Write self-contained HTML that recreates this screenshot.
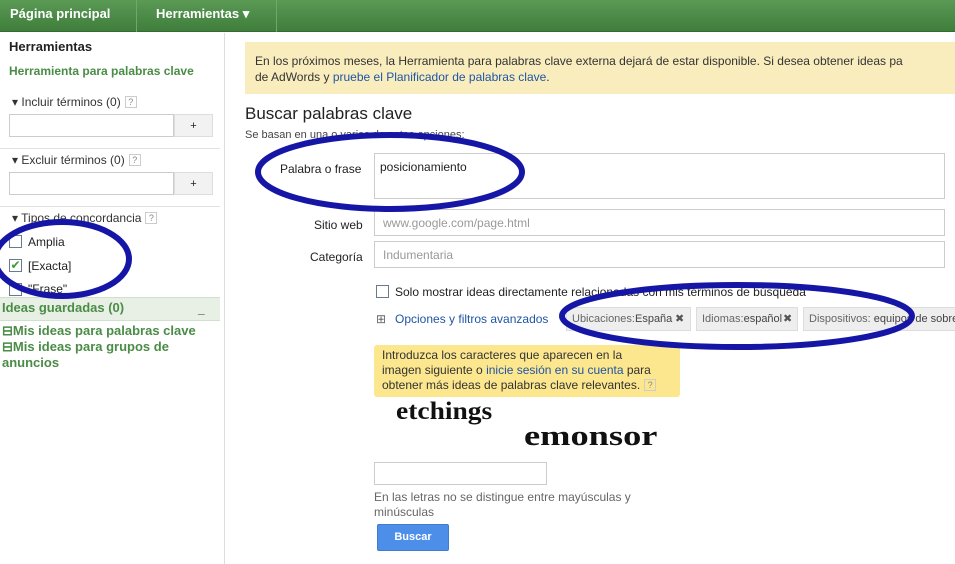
<!DOCTYPE html>
<html><head><meta charset="utf-8"><style>
*{margin:0;padding:0;box-sizing:border-box}
body{width:955px;height:564px;overflow:hidden;background:#fff;font-family:"Liberation Sans",Arial,sans-serif;font-size:12px;color:#222;position:relative}
.a{position:absolute;white-space:nowrap}
.top{position:absolute;left:0;top:0;width:955px;height:32px;background:linear-gradient(#5a9a55,#3f7e3b);border-bottom:1px solid #356b32}
.top span{position:absolute;top:6px;color:#fff;font-weight:bold;font-size:13px}
.sep{position:absolute;top:0;width:1px;height:32px;background:#6fa86a}
.green{color:#4a8c46;font-weight:bold}
.inp{position:absolute;border:1px solid #ccc;background:#fff}
.btn{position:absolute;border:1px solid #ddd;background:#f2f2f2;text-align:center;font-size:11px;line-height:22px}
.q{display:inline-block;width:12px;height:12px;border:1px solid #ccc;font-size:9px;line-height:10px;text-align:center;color:#888;vertical-align:1px;margin-left:4px}
.cb{position:absolute;width:13px;height:13px;border:1px solid #6a7a8c;background:#fff}
.link{color:#1f55a5}
.chip{position:absolute;top:307px;height:24px;background:#eee;border:1px solid #ddd;font-size:11px;line-height:22px;padding-left:5px;color:#666}
.chip b{color:#444;font-weight:normal}
</style></head><body>
<div class="top">
<span style="left:10px">Página principal</span>
<div class="sep" style="left:136px"></div>
<span style="left:156px">Herramientas ▾</span>
<div class="sep" style="left:276px"></div>
</div>
<div class="a" style="left:224px;top:33px;width:1px;height:531px;background:#ddd"></div>

<div class="a" style="left:9px;top:39px;font-weight:bold;font-size:13px">Herramientas</div>
<div class="a green" style="left:9px;top:64px;font-size:12px">Herramienta para palabras clave</div>
<div class="a" style="left:12px;top:95px;color:#333">▾ Incluir términos (0)<span class="q">?</span></div>
<div class="inp" style="left:9px;top:114px;width:165px;height:23px"></div>
<div class="btn" style="left:174px;top:114px;width:39px;height:23px">+</div>
<div class="a" style="left:0;top:148px;width:220px;height:1px;background:#e2e2e2"></div>
<div class="a" style="left:12px;top:153px;color:#333">▾ Excluir términos (0)<span class="q">?</span></div>
<div class="inp" style="left:9px;top:172px;width:165px;height:23px"></div>
<div class="btn" style="left:174px;top:172px;width:39px;height:23px">+</div>
<div class="a" style="left:0;top:206px;width:220px;height:1px;background:#e2e2e2"></div>
<div class="a" style="left:12px;top:211px;color:#333">▾ Tipos de concordancia<span class="q">?</span></div>
<div class="cb" style="left:9px;top:235px"></div><div class="a" style="left:28px;top:235px">Amplia</div>
<div class="cb" style="left:9px;top:259px;color:#3a9a3a;font-size:12px;line-height:10px;text-align:center">✔</div><div class="a" style="left:28px;top:259px">[Exacta]</div>
<div class="cb" style="left:9px;top:283px"></div><div class="a" style="left:28px;top:282px">"Frase"</div>
<div class="a" style="left:0;top:297px;width:220px;height:24px;background:#e8f0e6;border-top:1px solid #cfe0cc;border-bottom:1px solid #cfe0cc"></div>
<div class="a green" style="left:2px;top:300px;font-size:13px">Ideas guardadas (0)</div>
<div class="a" style="left:198px;top:302px;font-weight:bold">_</div>
<div class="a green" style="left:2px;top:323px;font-size:13px">⊟Mis ideas para palabras clave</div>
<div class="a green" style="left:2px;top:339px;font-size:13px;white-space:normal;width:210px;line-height:16px">⊟Mis ideas para grupos de anuncios</div>

<div class="a" style="left:245px;top:42px;width:710px;height:52px;background:#f9edbe"></div>
<div class="a" style="left:255px;top:53px;font-size:12px;line-height:16px;color:#333">En los próximos meses, la Herramienta para palabras clave externa dejará de estar disponible. Si desea obtener ideas pa<br>de AdWords y <span class="link">pruebe el Planificador de palabras clave</span>.</div>
<div class="a" style="left:245px;top:104px;font-size:17px;color:#222">Buscar palabras clave</div>
<div class="a" style="left:245px;top:129px;font-size:11px;color:#444">Se basan en una o varias de estas opciones:</div>
<div class="a" style="left:280px;top:162px">Palabra o frase</div>
<div class="inp" style="left:374px;top:153px;width:571px;height:46px"></div>
<div class="a" style="left:380px;top:160px">posicionamiento</div>
<div class="a" style="left:314px;top:218px">Sitio web</div>
<div class="inp" style="left:374px;top:209px;width:571px;height:27px"></div>
<div class="a" style="left:383px;top:216px;color:#999">www.google.com/page.html</div>
<div class="a" style="left:310px;top:250px">Categoría</div>
<div class="inp" style="left:374px;top:241px;width:571px;height:27px"></div>
<div class="a" style="left:383px;top:248px;color:#999">Indumentaria</div>
<div class="cb" style="left:376px;top:285px"></div>
<div class="a" style="left:395px;top:285px">Solo mostrar ideas directamente relacionadas con mis términos de búsqueda</div>
<div class="a" style="left:376px;top:312px;color:#666">⊞</div>
<div class="a link" style="left:395px;top:312px">Opciones y filtros avanzados</div>
<div class="chip" style="left:566px;width:125px">Ubicaciones:<b>España</b> <span style="position:absolute;left:108px;color:#555">✖</span></div>
<div class="chip" style="left:696px;width:102px">Idiomas:<b>español</b> <span style="position:absolute;left:86px;color:#555">✖</span></div>
<div class="chip" style="left:803px;width:160px">Dispositivos: <b>equipos de sobre</b></div>

<div class="a" style="left:374px;top:345px;width:306px;height:52px;background:#fce68e;border-radius:3px"></div>
<div class="a" style="left:382px;top:348px;line-height:15px;color:#333">Introduzca los caracteres que aparecen en la<br>imagen siguiente o <span class="link">inicie sesión en su cuenta</span> para<br>obtener más ideas de palabras clave relevantes.<span class="q">?</span></div>
<div class="a" style="left:396px;top:398px;font-family:'Liberation Serif',serif;font-weight:bold;font-size:25px;color:#111;transform-origin:0 0;transform:scaleX(1.1)">etchings</div>
<div class="a" style="left:524px;top:421px;font-family:'Liberation Serif',serif;font-weight:bold;font-size:28px;color:#111;transform-origin:0 0;transform:scaleX(1.3)">emonsor</div>
<div class="inp" style="left:374px;top:462px;width:173px;height:23px"></div>
<div class="a" style="left:374px;top:490px;color:#666;line-height:15px">En las letras no se distingue entre mayúsculas y<br>minúsculas</div>
<div class="a" style="left:377px;top:524px;width:72px;height:27px;background:#4d8ee8;border:1px solid #3f7bd0;border-radius:2px;color:#fff;font-weight:bold;font-size:11px;text-align:center;line-height:25px">Buscar</div>

<svg class="a" style="left:0;top:0" width="955" height="564">
<g fill="none" stroke="#1616a6" stroke-width="6">
<ellipse cx="62" cy="259" rx="67" ry="37"/>
<ellipse cx="390" cy="172" rx="132" ry="37"/>
<ellipse cx="737" cy="316" rx="175" ry="31"/>
</g></svg>
</body></html>
